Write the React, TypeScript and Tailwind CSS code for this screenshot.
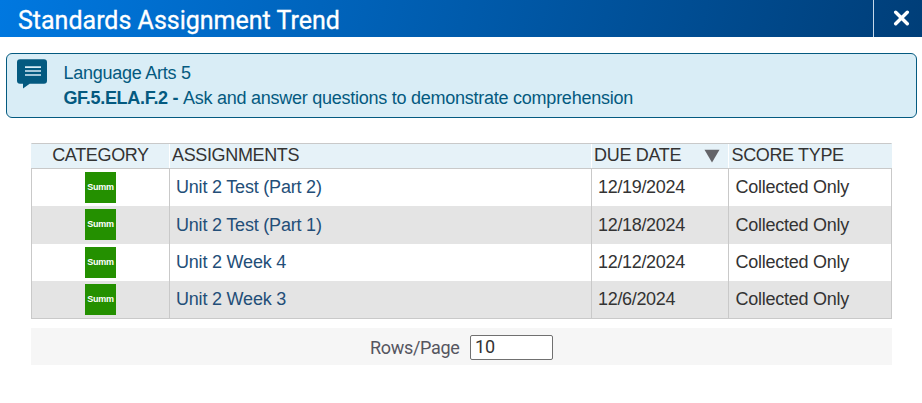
import React from 'react'

const assignments = [
  { category: 'Summ', name: 'Unit 2 Test (Part 2)', dueDate: '12/19/2024', scoreType: 'Collected Only' },
  { category: 'Summ', name: 'Unit 2 Test (Part 1)', dueDate: '12/18/2024', scoreType: 'Collected Only' },
  { category: 'Summ', name: 'Unit 2 Week 4', dueDate: '12/12/2024', scoreType: 'Collected Only' },
  { category: 'Summ', name: 'Unit 2 Week 3', dueDate: '12/6/2024', scoreType: 'Collected Only' },
]

const columns = 'grid grid-cols-[138px_422px_137px_162px]'

function TitleBar({ title }: { title: string }) {
  return (
    <header className="flex h-[37px] bg-linear-[105deg] from-[#0078e0] to-[#003e78] text-white">
      <h1 className="flex-1 pl-[18px] font-['Roboto',sans-serif] text-[25px] leading-[41px] whitespace-nowrap [-webkit-text-stroke:0.3px_white]">{title}</h1>
      <button aria-label="Close" className="flex w-[49px] items-center border-l border-[#c5d8ea] pl-[19px]">
        <svg width="17" height="17" viewBox="0 0 17 17" fill="none" stroke="currentColor" strokeWidth="3.4" strokeLinecap="round">
          <path d="M2.7 2.2 14.3 13.8M14.3 2.2 2.7 13.8" />
        </svg>
      </button>
    </header>
  )
}

function StandardInfo() {
  return (
    <section className="mt-4 mr-[5px] ml-[6px] flex h-[65px] rounded-[6px] border border-[#045a80] bg-[#d9edf6] text-[#045a80]">
      <svg className="mt-[5px] ml-[10px] shrink-0" width="30" height="30" viewBox="0 0 30 30">
        <path fill="#045a80" d="M3 0.3h24a3 3 0 0 1 3 3v18.4a3 3 0 0 1-3 3H12.7L6 29.5v-4.8H3a3 3 0 0 1-3-3V3.3a3 3 0 0 1 3-3Z" />
        <path stroke="#d9edf6" strokeWidth="1.6" d="M8 8.1h16M8 12h16M8 16h16" />
      </svg>
      <div className="mt-[7px] ml-[16px] pl-[0.4px] text-[18px] leading-[25px] whitespace-nowrap">
        <p className="tracking-[-0.25px]">Language Arts 5</p>
        <p className="tracking-[-0.25px]">
          <b className="tracking-[-0.3px]">GF.5.ELA.F.2 - </b>
          Ask and answer questions to demonstrate comprehension
        </p>
      </div>
    </section>
  )
}

function AssignmentTable() {
  return (
    <div className="mt-[25px] ml-[31px] w-[861px] text-[18px] text-[#333]">
      <div className={`${columns} h-[25px] border-x border-t border-x-[#e6f2f8] border-t-[#c9c9c9] bg-[#e6f2f8] leading-[23px] whitespace-nowrap`}>
        <div className="border-r border-white text-center tracking-[-0.35px]">CATEGORY</div>
        <div className="border-r border-white pl-[2px] tracking-[-0.35px]">ASSIGNMENTS</div>
        <div className="flex justify-between border-r border-white pr-2 pl-[2px] tracking-[-0.3px]">
          DUE DATE
          <svg className="mt-[5px]" width="16" height="14" viewBox="0 0 16 14">
            <path fill="#646468" d="M0.5 0.8h15L8 13.5Z" />
          </svg>
        </div>
        <div className="pl-[2.5px] tracking-[-0.35px]">SCORE TYPE</div>
      </div>
      <div className="border border-[#c9c9c9]">
        {assignments.map((item, index) => {
          return (
            <div key={index} className={`${columns} ${index === 1 ? 'h-[38px] leading-[39px]' : 'h-[37px] leading-[37px]'} whitespace-nowrap even:bg-[#e4e4e4]`}>
              <div className="flex justify-center border-r border-[#c9c9c9] pt-[3px]">
                <span className="size-[31px] bg-[#249000] text-center text-[9px] leading-[31px] font-bold tracking-[-0.2px] text-white">{item.category}</span>
              </div>
              <a className="border-r border-[#c9c9c9] pl-[6px] tracking-[-0.2px] text-[#234e78]">{item.name}</a>
              <div className="border-r border-[#c9c9c9] pl-[6px] tracking-[-0.32px]">{item.dueDate}</div>
              <div className="pl-[6.4px] tracking-[-0.25px]">{item.scoreType}</div>
            </div>
          )
        })}
      </div>
    </div>
  )
}

function Pager() {
  return (
    <footer className="mt-[9px] ml-[31px] flex h-[37px] w-[861px] items-center justify-center bg-[#f6f6f6] font-['Roboto',sans-serif] text-[18px]">
      <label className="w-[90px] pt-[2px] tracking-[-0.3px] text-[#555560]" htmlFor="rows">Rows/Page</label>
      <input id="rows" defaultValue="10" className="mt-px ml-[10px] h-[25px] w-[83px] rounded-[2px] border border-[#707070] bg-white px-1 pb-[2px] tracking-[-0.2px] text-[#333]" />
    </footer>
  )
}

export default function App() {
  return (
    <main className="h-[403px] w-[922px] overflow-hidden bg-white font-['Liberation_Sans',Arial,sans-serif]">
      <TitleBar title="Standards Assignment Trend" />
      <StandardInfo />
      <AssignmentTable />
      <Pager />
    </main>
  )
}
